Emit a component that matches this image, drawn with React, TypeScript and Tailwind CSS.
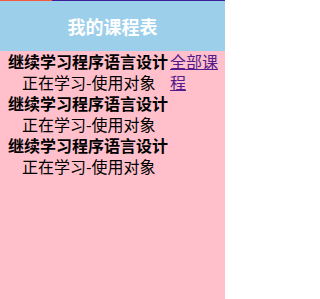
const COURSES = [
  { title: '继续学习程序语言设计', sub: '正在学习-使用对象', link: true },
  { title: '继续学习程序语言设计', sub: '正在学习-使用对象', link: false },
  { title: '继续学习程序语言设计', sub: '正在学习-使用对象', link: false },
];

export default function App() {
  return (
    <div
      className="w-[225px] h-[299px] bg-[#ffc0cb] text-black overflow-hidden"
      style={{ fontFamily: '"Noto Sans CJK SC", "Noto Sans", sans-serif' }}
    >
      {/* progress strip */}
      <div className="flex h-px">
        <div className="w-[52px] bg-[#f45a3c]" />
        <div className="flex-1 bg-[#3a1f9c]" />
      </div>

      <header className="h-[50px] bg-[#9ccfea] flex items-center justify-center">
        <h1 className="text-[18px] font-bold text-white leading-none">我的课程表</h1>
      </header>

      <div className="pl-2 pr-[7px]">
        {COURSES.map((c, i) => (
          <div key={i} className="flex items-start">
            <div className="flex-1 min-w-0">
              <div className="text-[16px] font-bold leading-[21px] whitespace-nowrap">{c.title}</div>
              <div className="text-[16px] leading-[21px] pl-[14px] whitespace-nowrap">{c.sub}</div>
            </div>
            {c.link && (
              <a href="#" className="w-[48px] shrink-0 text-[16px] leading-[21px] text-[#551a8b] underline break-all">
                全部课程
              </a>
            )}
          </div>
        ))}
      </div>
    </div>
  );
}
